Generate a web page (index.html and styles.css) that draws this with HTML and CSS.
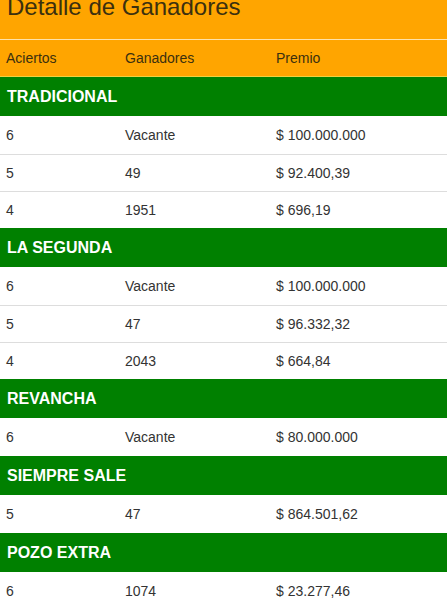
FILE: index.html
```html
<!DOCTYPE html>
<html lang="es">
<head>
<meta charset="utf-8">
<title>Detalle de Ganadores</title>
<link rel="stylesheet" href="styles.css">
</head>
<body>
<div class="top">
  <h1 class="title">Detalle de Ganadores</h1>
</div>
<div class="row head">
  <span>Aciertos</span><span>Ganadores</span><span>Premio</span>
</div>
<div class="group">TRADICIONAL</div>
<div class="row"><span>6</span><span>Vacante</span><span>$ 100.000.000</span></div>
<div class="row"><span>5</span><span>49</span><span>$ 92.400,39</span></div>
<div class="row"><span>4</span><span>1951</span><span>$ 696,19</span></div>
<div class="group">LA SEGUNDA</div>
<div class="row"><span>6</span><span>Vacante</span><span>$ 100.000.000</span></div>
<div class="row"><span>5</span><span>47</span><span>$ 96.332,32</span></div>
<div class="row"><span>4</span><span>2043</span><span>$ 664,84</span></div>
<div class="group">REVANCHA</div>
<div class="row"><span>6</span><span>Vacante</span><span>$ 80.000.000</span></div>
<div class="group">SIEMPRE SALE</div>
<div class="row"><span>5</span><span>47</span><span>$ 864.501,62</span></div>
<div class="group">POZO EXTRA</div>
<div class="row"><span>6</span><span>1074</span><span>$ 23.277,46</span></div>
</body>
</html>
```
FILE: styles.css
```css
html, body {
  margin: 0;
  padding: 0;
  background: #fff;
  font-family: "Liberation Sans", Arial, sans-serif;
  color: #333;
}
.top {
  background: #ffa500;
  height: 40px;
  overflow: hidden;
  display: flex;
  align-items: flex-end;
  padding: 0 0 20px 7px;
  box-sizing: border-box;
  border-bottom: 1px solid #ffe2a8;
}
.title {
  margin: 0;
  font-size: 24px;
  font-weight: normal;
  line-height: 24px;
  color: #3b300f;
  white-space: nowrap;
}
.row {
  display: grid;
  grid-template-columns: 119px 151px 1fr;
  height: 37px;
  box-sizing: border-box;
  align-items: center;
  font-size: 14px;
  border-top: 1px solid #ddd;
}
.row span {
  padding-left: 6px;
}
.row.head {
  background: #ffa500;
  border-top: none;
  border-bottom: 1px solid #f0d040;
  height: 37px;
  color: #3b300f;
}
.group + .row {
  border-top: none;
  height: 38px;
}
.group {
  background: #008000;
  color: #fff;
  font-weight: bold;
  font-size: 16px;
  height: 39px;
  display: flex;
  align-items: center;
  padding-left: 7px;
  box-sizing: border-box;
}
```
